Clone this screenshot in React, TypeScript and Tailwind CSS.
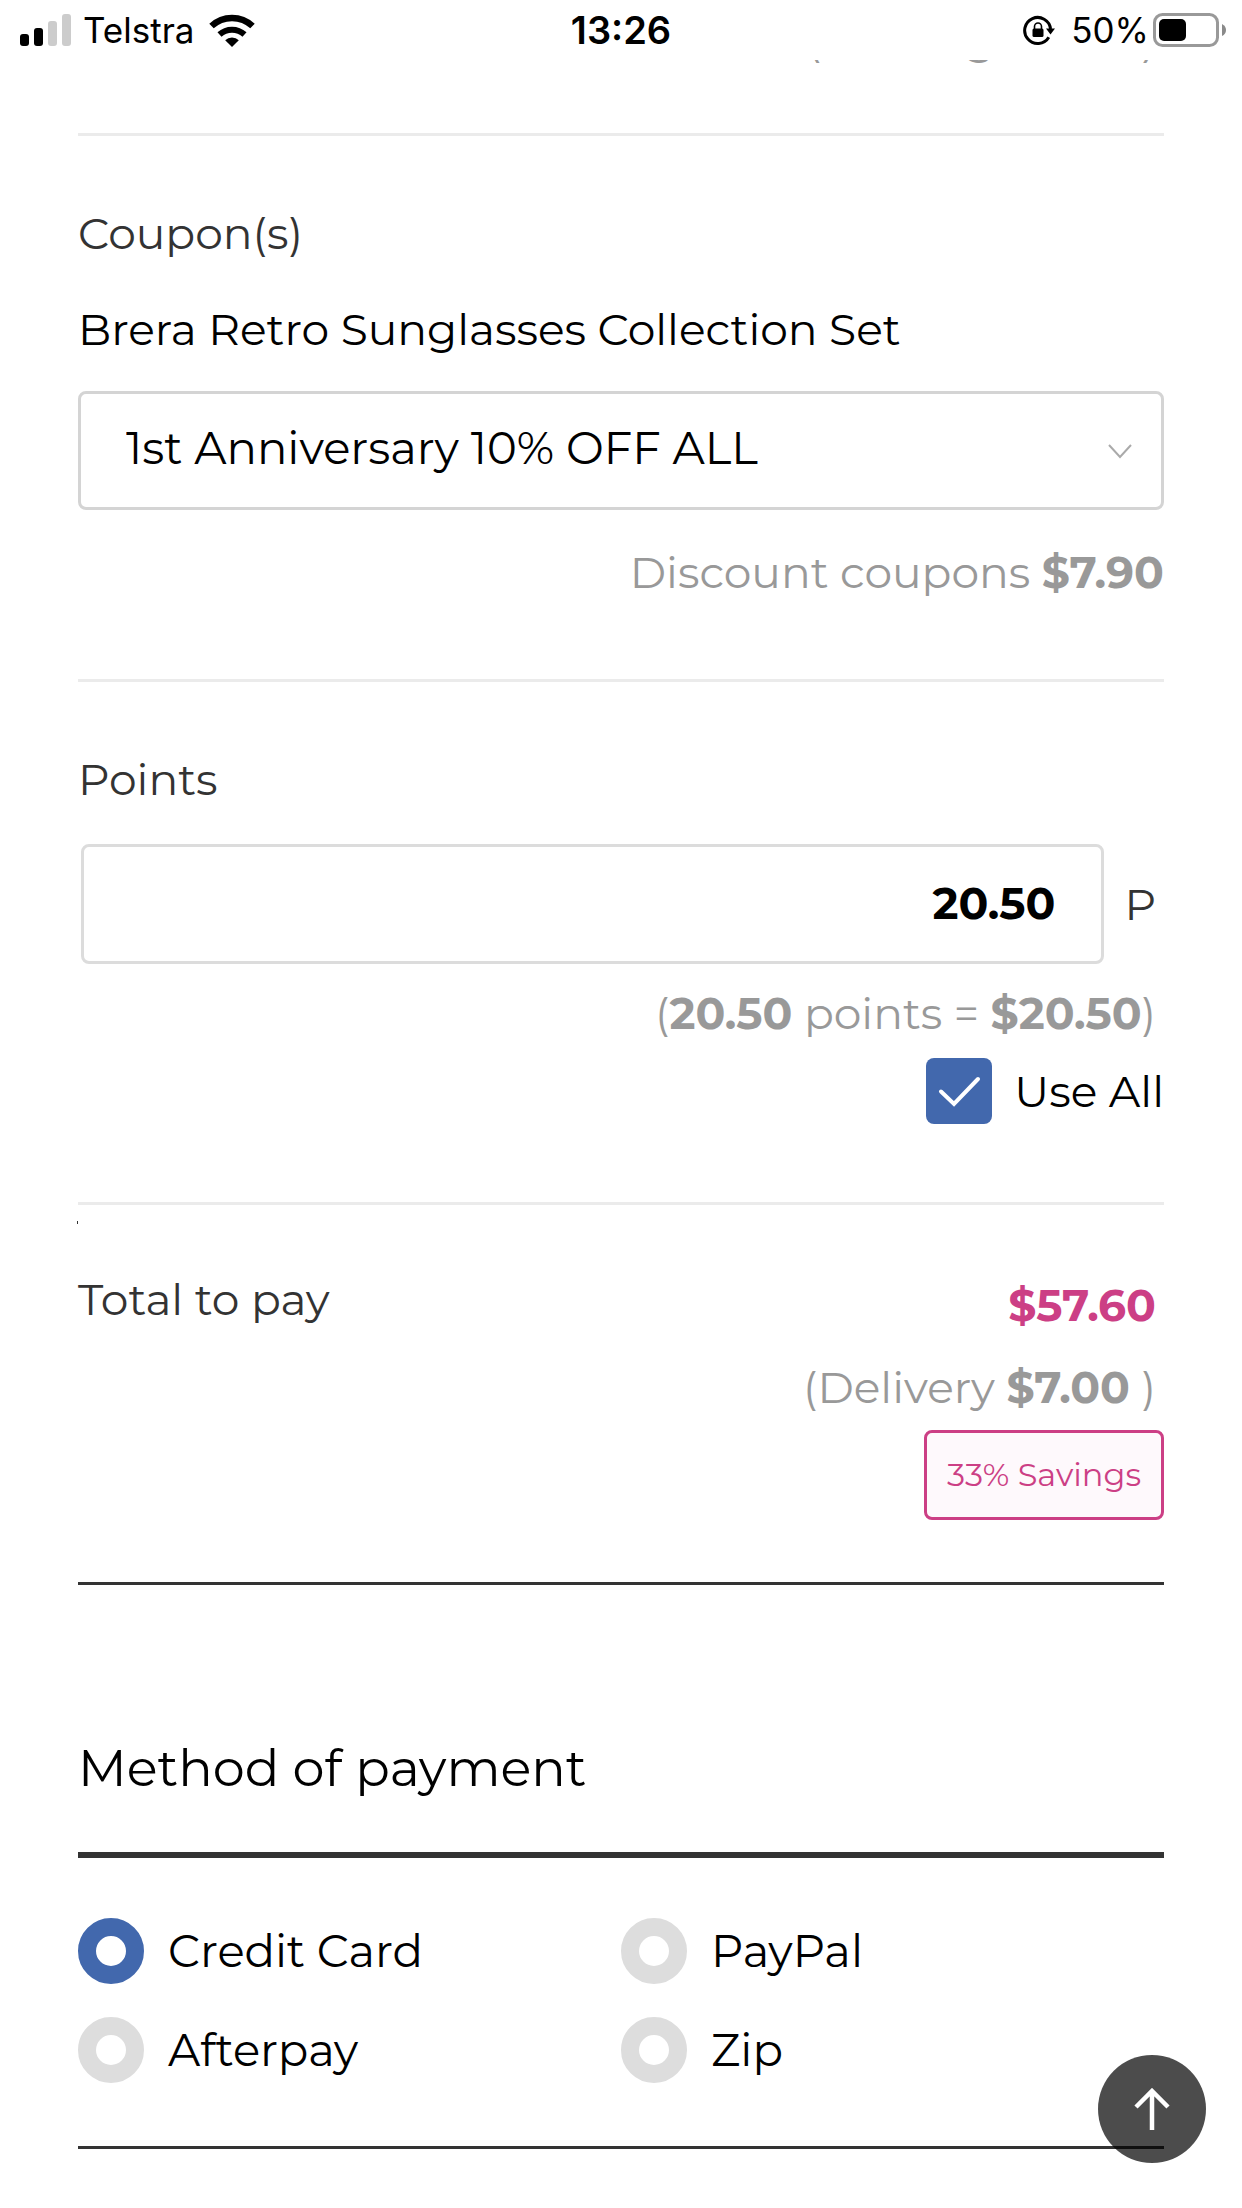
import { useState } from 'react'
import type { ReactNode } from 'react'

const METHODS = ['Credit Card', 'PayPal', 'Afterpay', 'Zip']
const COUPONS = ['1st Anniversary 10% OFF ALL', 'No coupon']

function StatusBar() {
  return (
    <header className="sticky top-0 z-20 grid h-[60px] grid-cols-3 items-center bg-white px-4 font-['Inter',sans-serif] text-[35px] leading-[60px] text-black">
      <div className="flex items-center pl-1">
        <svg className="h-8 w-[51px]" viewBox="0 0 51 32" aria-hidden="true">
          <rect x="0" y="20" width="9" height="12" rx="3" />
          <rect x="14" y="14" width="9" height="18" rx="3" />
          <rect x="28" y="7" width="9" height="25" rx="3" fill="#ccc" />
          <rect x="42" y="0" width="9" height="32" rx="3" fill="#ccc" />
        </svg>
        <span className="ml-3 mr-[14px]">Telstra</span>
        <svg className="h-[33px] w-[46px]" viewBox="0 0 46 33" fill="none" stroke="#000" aria-hidden="true">
          <path d="M2.5 12a30 30 0 0 1 41 0" strokeWidth="6.500" />
          <path d="M10.500 20.500a18.500 18.500 0 0 1 25 0" strokeWidth="6" />
          <path d="M23 33l-6.800-6.800a9.600 9.600 0 0 1 13.600 0z" fill="#000" stroke="none" />
        </svg>
      </div>
      <time className="text-center text-[38px] font-semibold">13:26</time>
      <div className="flex items-center justify-end">
        <svg className="mr-4 h-8 w-8" viewBox="0 0 32 32" fill="none" stroke="#000" aria-hidden="true">
          <path d="M25.800 23.200A13 13 0 1 1 27.600 15" strokeWidth="3" />
          <path d="M23 14.500h9l-4.500 6z" fill="#000" stroke="none" />
          <rect x="9.500" y="14.500" width="11" height="8.500" rx="1.500" fill="#000" stroke="none" />
          <path d="M11.500 15v-2.500a3.500 3.500 0 0 1 7 0V15" strokeWidth="1.600" />
        </svg>
        <span className="mr-1">50%</span>
        <svg className="h-[34px] w-[73px]" viewBox="0 0 73 34" aria-hidden="true">
          <rect x="1.500" y="1.500" width="63" height="31" rx="8" fill="none" stroke="#999" strokeWidth="3" />
          <rect x="6" y="6" width="27" height="22" rx="5" />
          <path d="M69 11q4 2 4 6t-4 6z" fill="#8a8a8a" />
        </svg>
      </div>
    </header>
  )
}

function Section({ children, className }: { children: ReactNode; className: string }) {
  return <section className={className}>{children}</section>
}

export default function App() {
  const [coupon, setCoupon] = useState(COUPONS[0])
  const [points, setPoints] = useState('20.50')
  const [useAll, setUseAll] = useState(true)
  const [method, setMethod] = useState('Credit Card')

  return (
    <div className="min-h-screen bg-white font-['Montserrat','Inter',sans-serif] text-[44px] font-normal leading-[60px] text-black">
      <StatusBar />

      <main className="px-[78px]">
        <Section className="border-b-[3px] border-[#ebebeb] pb-16 pr-2 text-[#999]">
          <div className="flex h-[9px] items-end justify-end overflow-hidden">
            <p>(Earning <b className="font-bold">$7.00</b> )</p>
          </div>
        </Section>

        <Section className="border-b-[3px] border-[#ebebeb] pb-[77px] pt-[67px]">
          <h2 className="text-[#333]">Coupon(s)</h2>
          <label htmlFor="coupon" className="mt-9 block">Brera Retro Sunglasses Collection Set</label>
          <div className="relative mt-8">
            <select
              id="coupon"
              value={coupon}
              onChange={e => setCoupon(e.target.value)}
              className="block h-[119px] w-full appearance-none rounded-lg border-[3px] border-[#d4d4d4] bg-white pb-[6px] pl-[45px] pr-24 text-[45px] outline-none"
            >
              {COUPONS.map(c => <option key={c}>{c}</option>)}
            </select>
            <svg className="pointer-events-none absolute right-8 top-[52px] h-4 w-6" viewBox="0 0 24 16" fill="none" stroke="#aaa" strokeWidth="2" aria-hidden="true">
              <path d="M1 2l11 12L23 2" />
            </svg>
          </div>
          <p className="mt-8 text-right text-[#999]">Discount coupons <b className="font-bold">$7.90</b></p>
        </Section>

        <Section className="border-b-[3px] border-[#ebebeb] pb-[78px] pt-[67px]">
          <h2><label htmlFor="points" className="block text-[#333]">Points</label></h2>
          <div className="mt-[35px] flex items-center gap-5 pl-[3px] pr-2">
            <input
              id="points"
              value={points}
              onChange={e => setPoints(e.target.value)}
              className="h-[120px] min-w-0 flex-1 rounded-lg border-[3px] border-[#dcdcdc] pb-[2px] pr-[46px] text-right font-bold outline-none"
            />
            <span className="text-[#333]">P</span>
          </div>
          <p className="mt-[19px] pr-2 text-right text-[#999]">
            (<b className="font-bold">20.50</b> points = <b className="font-bold">$20.50</b>)
          </p>
          <label className="mt-[15px] flex items-center justify-end gap-[22px]">
            <span className="grid">
              <input
                type="checkbox"
                checked={useAll}
                onChange={e => setUseAll(e.target.checked)}
                className="col-start-1 row-start-1 h-[66px] w-[66px] appearance-none rounded-lg bg-[#ddd] checked:bg-[#4268ad]"
              />
              <svg className="pointer-events-none col-start-1 row-start-1 h-[66px] w-[66px]" viewBox="0 0 66 66" fill="none" stroke="#fff" strokeWidth="4" strokeLinecap="round" aria-hidden="true">
                <path d="M15 33.500L28 46L52 21" />
              </svg>
            </span>
            Use All
          </label>
        </Section>

        <Section className="relative flex items-start justify-between border-b-[3px] border-[#333] pb-[62px] pt-16">
          <span className="absolute -left-px top-4 h-[3px] w-px bg-[#333]" />
          <h2 className="text-[#333]">Total to pay</h2>
          <div className="flex flex-col items-end pt-[6px]">
            <strong className="pr-2 font-bold text-[#cc3f85]">$57.60</strong>
            <p className="mt-[22px] pr-2 text-[#999]">(Delivery <b className="font-bold">$7.00</b> )</p>
            <span className="mt-[13px] flex h-[90px] items-center rounded-lg border-[3px] border-[#cc3f85] bg-[#fef9fc] px-5 text-[32px] text-[#cc3f85]">
              33% Savings
            </span>
          </div>
        </Section>

        <h2 className="border-b-[6px] border-[#333] pb-[54px] pt-[153px] text-[51px]">Method of payment</h2>

        <div role="radiogroup" aria-label="Method of payment" className="grid grid-cols-2 gap-y-[33px] border-b-[3px] border-[#333] pb-[63px] pt-[60px] text-[45px]">
          {METHODS.map(m => (
            <label key={m} className="flex items-center gap-6">
              <input
                type="radio"
                name="method"
                checked={method === m}
                onChange={() => setMethod(m)}
                className="h-[66px] w-[66px] appearance-none rounded-full border-[18px] border-[#ddd] bg-white checked:border-[#4268ad]"
              />
              {m}
            </label>
          ))}
        </div>
      </main>

      <button
        type="button"
        aria-label="Back to top"
        onClick={() => window.scrollTo({ top: 0 })}
        className="fixed bottom-[45px] right-9 z-10 flex h-[108px] w-[108px] items-center justify-center rounded-full bg-black/70"
      >
        <svg className="h-[42px] w-9" viewBox="0 0 36 42" fill="none" stroke="#fff" strokeWidth="4.500" aria-hidden="true">
          <path d="M18 42V3M2 19L18 3l16 16" />
        </svg>
      </button>
    </div>
  )
}
